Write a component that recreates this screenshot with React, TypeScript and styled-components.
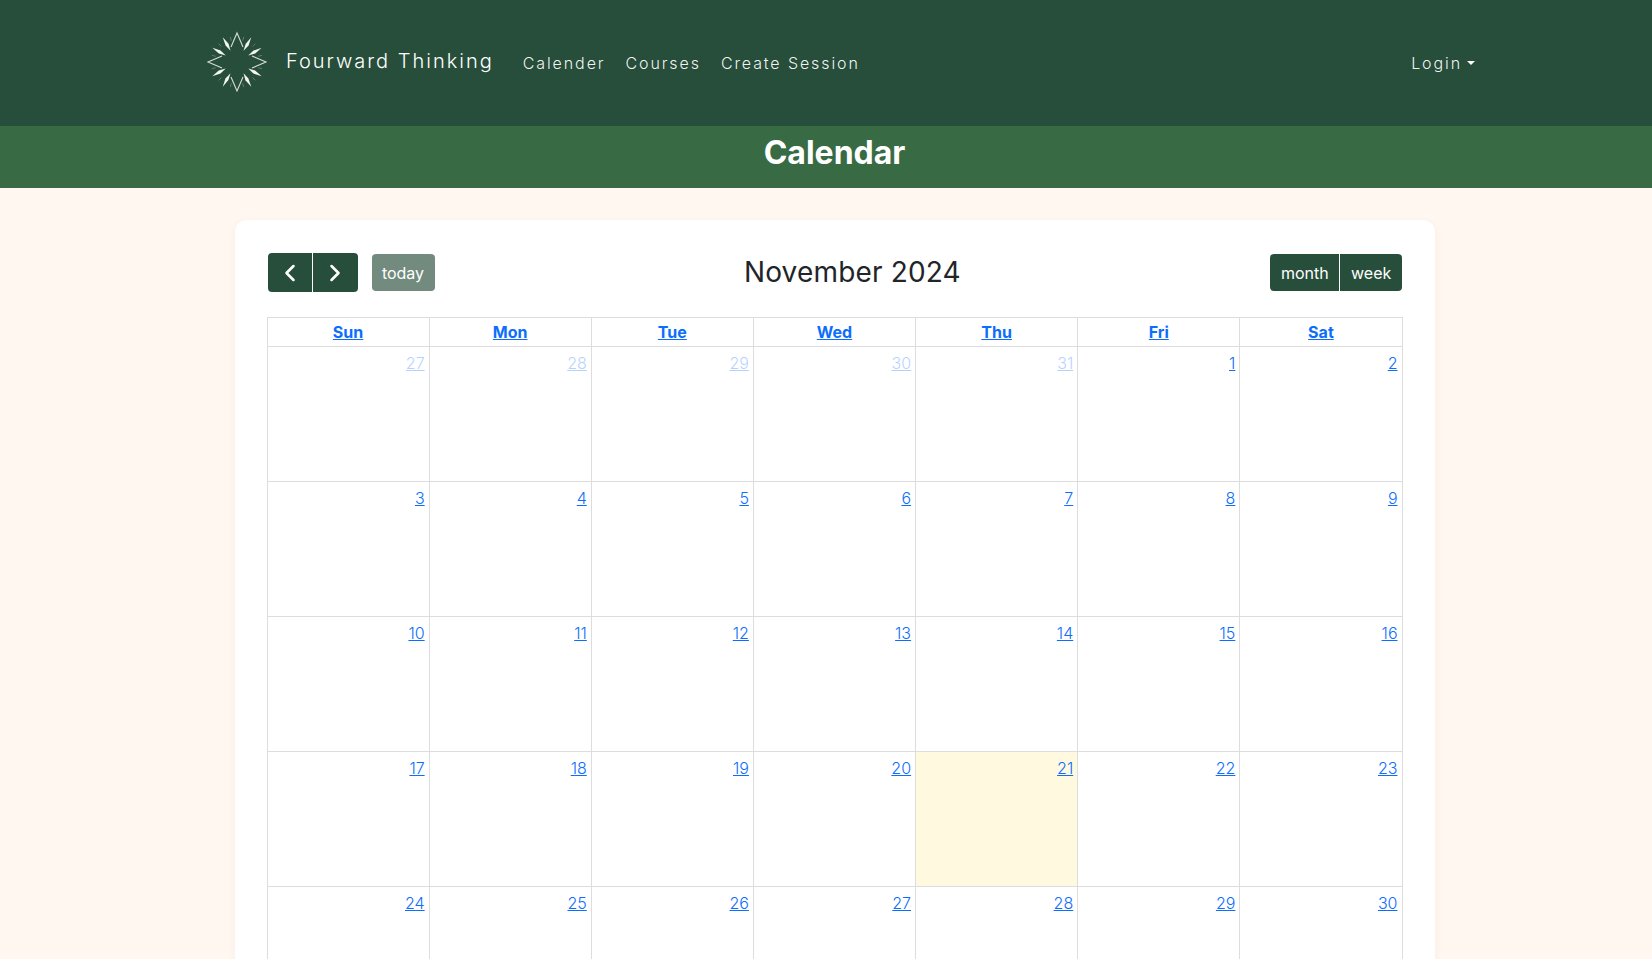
import styled, { createGlobalStyle } from "styled-components";
import { FiChevronLeft, FiChevronRight } from "react-icons/fi";

const GlobalStyle = createGlobalStyle`
  html {
    margin: 0;
    padding: 0;
    overflow: hidden;
    height: 100%;
  }
  body {
    margin: 0;
    padding: 0;
    width: 1669px;
    background: #fff7f0;
    font-family: "Inter", "Liberation Sans", sans-serif;
    font-size: 16px;
    color: #212529;
  }
`;

const Navbar = styled.nav`
  height: 126px;
  background: #274e3a;
  display: flex;
  align-items: center;
  justify-content: space-between;
  padding: 0 194px 0 206px;
  box-sizing: border-box;
`;

const NavLeft = styled.div`
  display: flex;
  align-items: center;
`;

const Brand = styled.a`
  display: flex;
  align-items: center;
  gap: 18px;
  color: #fff;
  font-size: 20px;
  font-weight: 300;
  letter-spacing: 2px;
  margin-right: 29px;
  margin-bottom: 4px;
`;

const NavLinks = styled.div`
  display: flex;
  gap: 20px;
`;

const NavLink = styled.a`
  color: rgba(255, 255, 255, 0.95);
  font-size: 16px;
  font-weight: 300;
  letter-spacing: 1.9px;
`;

const LoginLink = styled(NavLink)`
  display: flex;
  align-items: center;
  gap: 5px;
`;

const Caret = styled.span`
  border-top: 4.8px solid #fff;
  border-left: 4.8px solid transparent;
  border-right: 4.8px solid transparent;
`;

const TitleBar = styled.div`
  height: 62px;
  background: #386b44;
  display: flex;
  align-items: center;
  justify-content: center;
  padding-bottom: 10px;
  box-sizing: border-box;
`;

const PageTitle = styled.h1`
  margin: 0;
  color: #fff;
  font-size: 32px;
  font-weight: 700;
`;

const Card = styled.main`
  width: 1200px;
  box-sizing: border-box;
  margin: 32px auto;
  padding: 33px 32px 32px;
  background: #fff;
  border-radius: 12px;
  box-shadow: 0 2px 8px rgba(120, 90, 60, 0.06);
`;

const Toolbar = styled.div`
  display: flex;
  align-items: center;
  justify-content: space-between;
  margin-bottom: 25px;
  padding: 0 0.5px 0 1px;
`;

const ToolbarGroup = styled.div`
  display: flex;
  align-items: center;
`;

const ButtonGroup = styled.div`
  display: flex;
`;

const Button = styled.button`
  height: 37px;
  border: none;
  background: #274e3a;
  color: #fff;
  font-family: inherit;
  font-size: 16px;
  padding: 0 10.7px;
  display: flex;
  align-items: center;
  justify-content: center;
  & + & {
    border-left: 1px solid #fff;
  }
  &:first-child {
    border-radius: 4px 0 0 4px;
  }
  &:last-child {
    border-radius: 0 4px 4px 0;
  }
`;

const NavButton = styled(Button)<{ $w: number }>`
  width: ${(p) => p.$w}px;
  height: 39px;
  padding: 0;
  svg {
    stroke-width: 2.2;
  }
  & + & svg {
    margin-left: 1px;
  }
`;

const TodayButton = styled(Button)`
  margin-left: 14px;
  opacity: 0.65;
  width: 63px;
  padding: 0;
  &:last-child {
    border-radius: 4px;
  }
`;

const MonthTitle = styled.h2`
  margin: -2px 0 0;
  font-size: 28px;
  font-weight: 400;
  letter-spacing: 0.16px;
`;

const Table = styled.table`
  width: 1136px;
  table-layout: fixed;
  border-collapse: collapse;
`;

const HeadCell = styled.th`
  border: 1px solid #ddd;
  height: 28px;
  padding: 0;
  font-size: 16px;
  font-weight: 700;
  text-align: center;
`;

const DayCell = styled.td<{ $today?: boolean }>`
  border: 1px solid #ddd;
  height: 124.1px;
  padding: 6px 4px 4px;
  vertical-align: top;
  text-align: right;
  background: ${(p) => (p.$today ? "#fff9df" : "transparent")};
`;

const BlueLink = styled.a<{ $muted?: boolean; $light?: boolean }>`
  color: #0d6efd;
  text-decoration: underline;
  font-weight: ${(p) => (p.$light ? 300 : "inherit")};
  opacity: ${(p) => (p.$muted ? 0.3 : 1)};
`;

const days = ["Sun", "Mon", "Tue", "Wed", "Thu", "Fri", "Sat"];

const weeks = [
  [27, 28, 29, 30, 31, 1, 2],
  [3, 4, 5, 6, 7, 8, 9],
  [10, 11, 12, 13, 14, 15, 16],
  [17, 18, 19, 20, 21, 22, 23],
  [24, 25, 26, 27, 28, 29, 30],
];

const Logo = () => {
  const thick = [30, 60, 120, 150, 210, 240, 300, 330];
  const vees = [0, 90, 180, 270];
  const faint = [15, 45, 75, 105, 135, 165, 195, 225, 255, 285, 315, 345];
  return (
    <svg width="62" height="62" viewBox="-31 -32 62 62">
      {faint.map((a) => (
        <line key={a} x1="0" y1="-26" x2="0" y2="-22" stroke="#fff" strokeOpacity="0.3" strokeWidth="0.8" transform={`rotate(${a})`} />
      ))}
      {thick.map((a) => (
        <polygon key={a} points="0,-28.5 1.8,-20 0,-13 -1.6,-20" fill="#f4f6f1" transform={`rotate(${a})`} />
      ))}
      {vees.map((a) => (
        <polyline key={a} points="-6,-15 0,-29 6,-15" fill="none" stroke="#d5dcd5" strokeWidth="1.1" transform={`rotate(${a})`} />
      ))}
    </svg>
  );
};

const App = () => {
  return (
    <>
      <GlobalStyle />
      <Navbar>
        <NavLeft>
          <Brand>
            <Logo />
            Fourward Thinking
          </Brand>
          <NavLinks>
            <NavLink>Calender</NavLink>
            <NavLink>Courses</NavLink>
            <NavLink>Create Session</NavLink>
          </NavLinks>
        </NavLeft>
        <LoginLink>
          Login
          <Caret />
        </LoginLink>
      </Navbar>
      <TitleBar>
        <PageTitle>Calendar</PageTitle>
      </TitleBar>
      <Card>
        <Toolbar>
          <ToolbarGroup>
            <ButtonGroup>
              <NavButton $w={44}>
                <FiChevronLeft size={28} />
              </NavButton>
              <NavButton $w={46}>
                <FiChevronRight size={28} />
              </NavButton>
            </ButtonGroup>
            <TodayButton>today</TodayButton>
          </ToolbarGroup>
          <MonthTitle>November 2024</MonthTitle>
          <ButtonGroup>
            <Button>month</Button>
            <Button>week</Button>
          </ButtonGroup>
        </Toolbar>
        <Table>
          <thead>
            <tr>
              {days.map((d) => (
                <HeadCell key={d}>
                  <BlueLink>{d}</BlueLink>
                </HeadCell>
              ))}
            </tr>
          </thead>
          <tbody>
            {weeks.map((week, w) => (
              <tr key={w}>
                {week.map((n, i) => (
                  <DayCell key={i} $today={w === 3 && n === 21}>
                    <BlueLink $light $muted={w === 0 && n > 20}>
                      {n}
                    </BlueLink>
                  </DayCell>
                ))}
              </tr>
            ))}
          </tbody>
        </Table>
      </Card>
    </>
  );
};

export default App;
